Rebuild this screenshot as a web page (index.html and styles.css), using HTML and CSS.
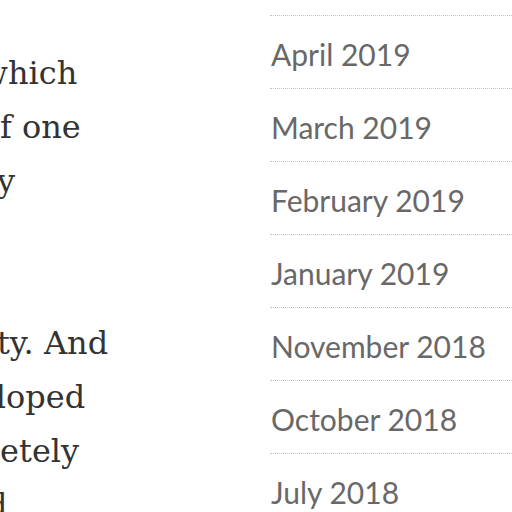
FILE: index.html
```html
<!DOCTYPE html>
<html lang="en">
<head>
<meta charset="utf-8">
<title>Archives</title>
<link rel="stylesheet" href="styles.css">
</head>
<body>
<div class="page">
  <article class="post">
    <p class="para">It is a&thinsp; pleasure, which<br>and it is the gift of one<br>to the person truly<br>in life.</p>
    <p class="para">of a&nbsp; certain beauty. And<br>so it is&nbsp; fully developed<br>that is now completely<br>fresh&thinsp; original and</p>
  </article>
  <aside class="archive">
    <ul class="archive-list">
      <li class="archive-item"><a class="archive-link" href="#">April 2019</a></li>
      <li class="archive-item"><a class="archive-link" href="#">March 2019</a></li>
      <li class="archive-item"><a class="archive-link" href="#">February 2019</a></li>
      <li class="archive-item"><a class="archive-link" href="#">January 2019</a></li>
      <li class="archive-item"><a class="archive-link" href="#">November 2018</a></li>
      <li class="archive-item"><a class="archive-link" href="#">October 2018</a></li>
      <li class="archive-item"><a class="archive-link" href="#">July 2018</a></li>
    </ul>
  </aside>
</div>
</body>
</html>
```

FILE: styles.css
```css
html, body {
  margin: 0;
  padding: 0;
  background: #ffffff;
  overflow: hidden;
  width: 512px;
  height: 512px;
}

.page {
  display: flex;
  align-items: flex-start;
  gap: 38px;
}

.post {
  flex: 0 0 520px;
  margin-left: -288px;
  padding-top: 46px;
  font-family: "DejaVu Serif", "Liberation Serif", serif;
  font-size: 32px;
  line-height: 54px;
  color: #333333;
  white-space: nowrap;
}

.para {
  margin: 0 0 54px 0;
}

.archive {
  flex: 0 0 300px;
  padding-top: 15px;
}

.archive-list {
  list-style: none;
  margin: 0;
  padding: 0;
}

.archive-item {
  border-top: 1px dotted #c4c4c4;
  padding: 20px 0 16px 1px;
  font-family: Lato, "Open Sans", sans-serif;
  font-size: 30px;
  line-height: 36px;
}

.archive-link {
  color: #686868;
  text-decoration: none;
}
```
